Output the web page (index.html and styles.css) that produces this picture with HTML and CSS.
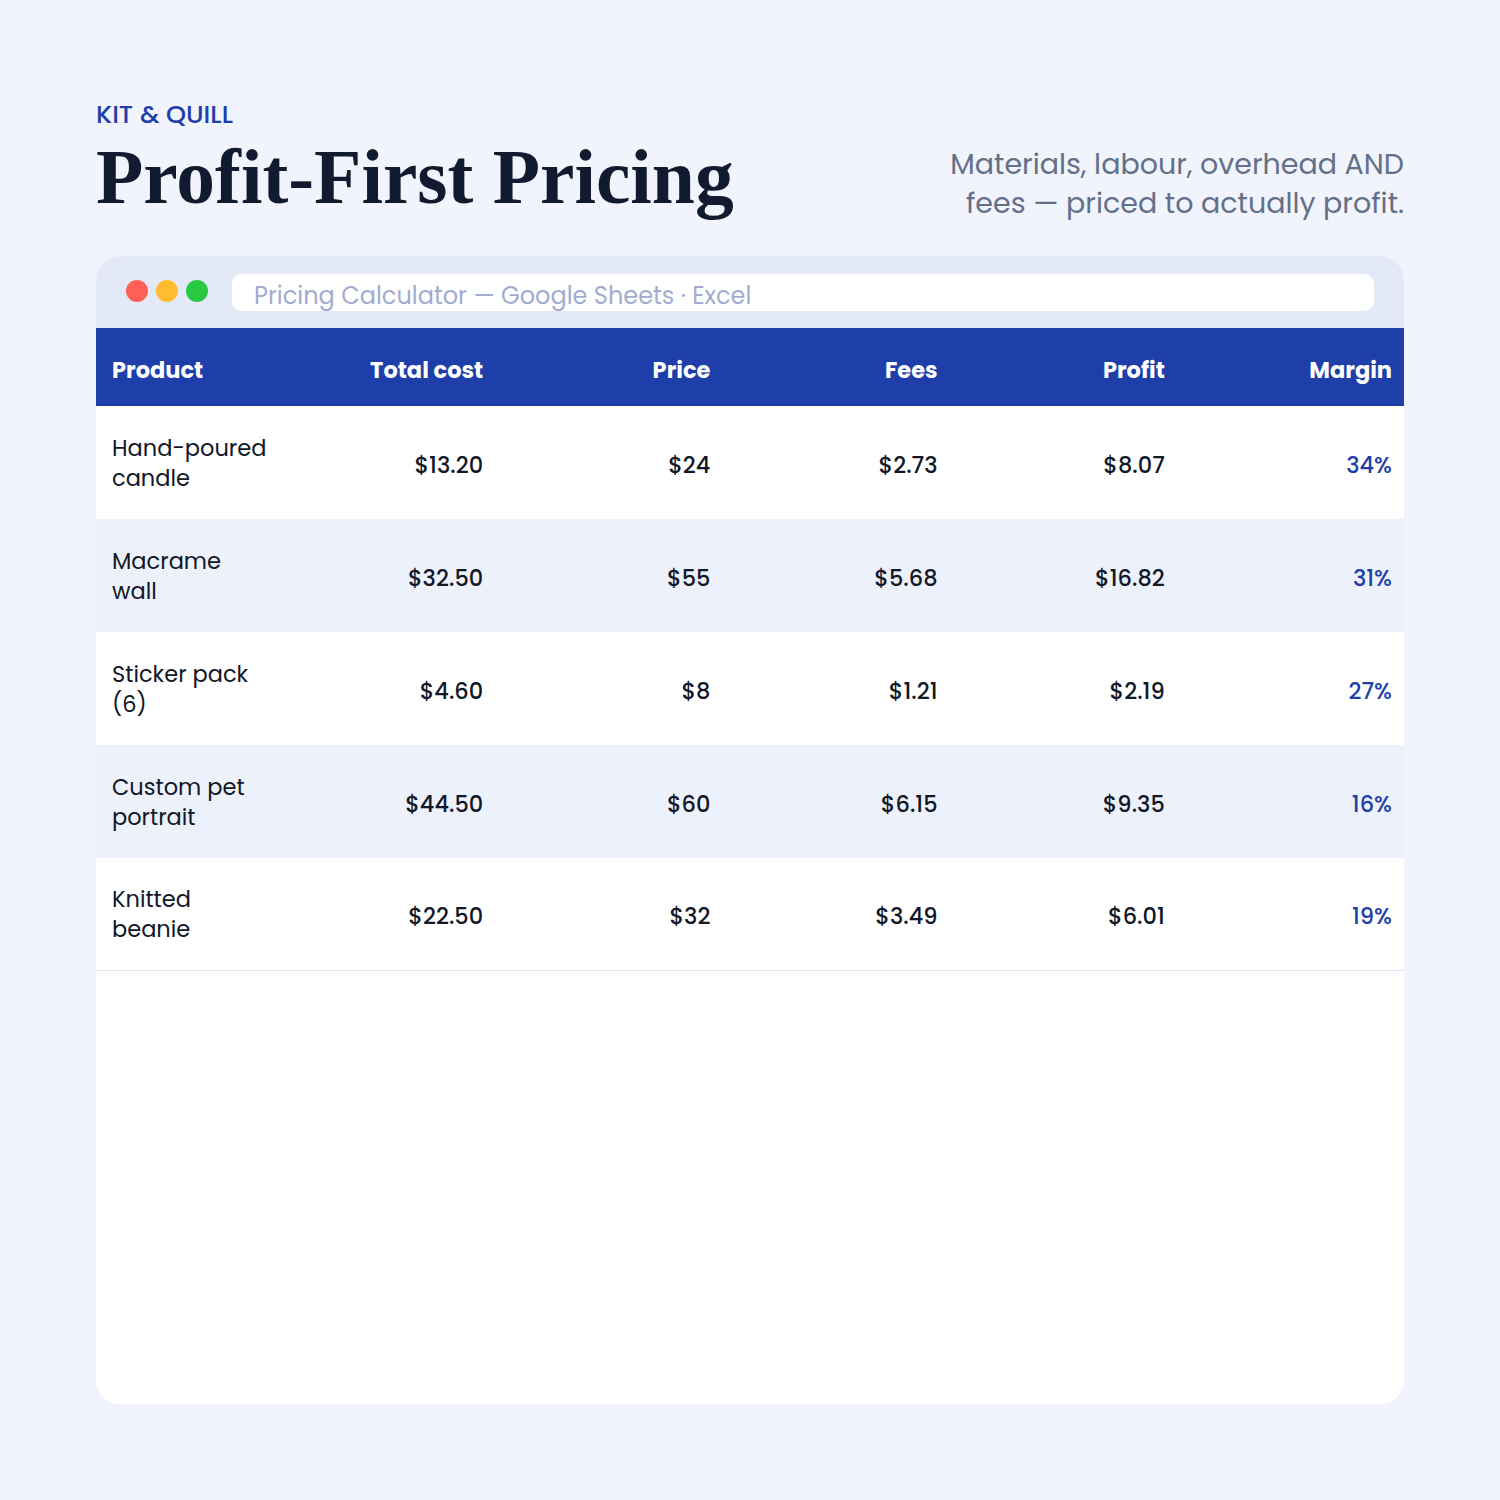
FILE: index.html
```html
<!DOCTYPE html>
<html lang="en">
<head>
<meta charset="utf-8">
<title>Profit-First Pricing</title>
<link rel="stylesheet" href="styles.css">
</head>
<body>
<div class="page">
  <header class="hero">
    <div class="hero-left">
      <div class="brand">KIT &amp; QUILL</div>
      <h1 class="title">Profit-First Pricing</h1>
    </div>
    <p class="tagline">Materials, labour, overhead AND<br>fees — priced to actually profit.</p>
  </header>

  <section class="card">
    <div class="titlebar">
      <div class="dots">
        <span class="dot dot-red"></span>
        <span class="dot dot-yellow"></span>
        <span class="dot dot-green"></span>
      </div>
      <div class="address">Pricing Calculator — Google Sheets · Excel</div>
    </div>

    <div class="table">
      <div class="row head">
        <div class="cell name">Product</div>
        <div class="cell">Total cost</div>
        <div class="cell">Price</div>
        <div class="cell">Fees</div>
        <div class="cell">Profit</div>
        <div class="cell">Margin</div>
      </div>
      <div class="row">
        <div class="cell name"><span><span class="nw">Hand-poured</span> candle</span></div>
        <div class="cell">$13.20</div>
        <div class="cell">$24</div>
        <div class="cell">$2.73</div>
        <div class="cell">$8.07</div>
        <div class="cell margin">34%</div>
      </div>
      <div class="row alt">
        <div class="cell name"><span>Macrame wall</span></div>
        <div class="cell">$32.50</div>
        <div class="cell">$55</div>
        <div class="cell">$5.68</div>
        <div class="cell">$16.82</div>
        <div class="cell margin">31%</div>
      </div>
      <div class="row">
        <div class="cell name"><span>Sticker pack (6)</span></div>
        <div class="cell">$4.60</div>
        <div class="cell">$8</div>
        <div class="cell">$1.21</div>
        <div class="cell">$2.19</div>
        <div class="cell margin">27%</div>
      </div>
      <div class="row alt">
        <div class="cell name"><span>Custom pet portrait</span></div>
        <div class="cell">$44.50</div>
        <div class="cell">$60</div>
        <div class="cell">$6.15</div>
        <div class="cell">$9.35</div>
        <div class="cell margin">16%</div>
      </div>
      <div class="row last">
        <div class="cell name"><span>Knitted beanie</span></div>
        <div class="cell">$22.50</div>
        <div class="cell">$32</div>
        <div class="cell">$3.49</div>
        <div class="cell">$6.01</div>
        <div class="cell margin">19%</div>
      </div>
    </div>
  </section>
</div>
</body>
</html>
```

FILE: styles.css
```css
* { box-sizing: border-box; }

html, body {
  margin: 0;
  padding: 0;
  background: #f1f4fd;
}

body {
  font-family: "Poppins", "Open Sans", "Noto Sans", sans-serif;
  color: #111827;
}

.page {
  width: 1500px;
  height: 1500px;
  padding: 96px;
  display: flex;
  flex-direction: column;
}

.hero {
  display: flex;
  justify-content: space-between;
  align-items: flex-start;
  height: 160px;
}

.brand {
  font-size: 25.5px;
  line-height: 36px;
  color: #1e3faa;
  font-weight: 500;
}

.title {
  margin: 3px 0 0 0;
  font-family: "Liberation Serif", "DejaVu Serif", serif;
  font-weight: 700;
  font-size: 77.5px;
  line-height: 84px;
  color: #111a2e;
}

.tagline {
  margin: 49px 0 0 0;
  text-align: right;
  font-size: 28.5px;
  line-height: 39px;
  color: #637089;
  font-weight: 400;
}

.card {
  flex: 1;
  background: #ffffff;
  border-radius: 24px;
  overflow: hidden;
  display: flex;
  flex-direction: column;
}

.titlebar {
  height: 72px;
  background: #e4e9f8;
  display: flex;
  align-items: center;
  padding: 0 30px;
  gap: 24px;
}

.dots {
  display: flex;
  gap: 8px;
  margin-top: -2px;
}

.dot {
  width: 22px;
  height: 22px;
  border-radius: 50%;
  display: block;
}
.dot-red { background: #fe5f57; }
.dot-yellow { background: #febc2e; }
.dot-green { background: #28c840; }

.address {
  flex: 1;
  height: 37px;
  background: #ffffff;
  border-radius: 10px;
  padding: 0 22px;
  font-size: 24px;
  line-height: 43px;
  color: #a1acd0;
  overflow: hidden;
  white-space: nowrap;
}

.table {
  display: flex;
  flex-direction: column;
}

.row {
  display: grid;
  grid-template-columns: 172px repeat(5, 1fr);
  height: 113px;
  align-items: center;
  background: #ffffff;
  padding-top: 4px;
}

.row.alt { background: #edf1fb; }

.row.last { border-bottom: 1px solid #dfe4ef; }

.row.head {
  height: 78px;
  padding-top: 6px;
  background: #1e3faa;
  color: #ffffff;
}

.cell {
  text-align: right;
  padding: 0 12px 0 0;
  font-size: 22.5px;
  line-height: 30px;
  font-weight: 500;
}

.row.head .cell { font-weight: 700; }

.cell.name {
  text-align: left;
  padding: 0 0 0 16px;
  font-weight: 400;
}

.row:not(.head) .cell.name { margin-top: -4px; }

.cell.name > span {
  display: block;
  max-width: 150px;
}

.nw { white-space: nowrap; }

.cell.margin {
  color: #1e3faa;
}
```
